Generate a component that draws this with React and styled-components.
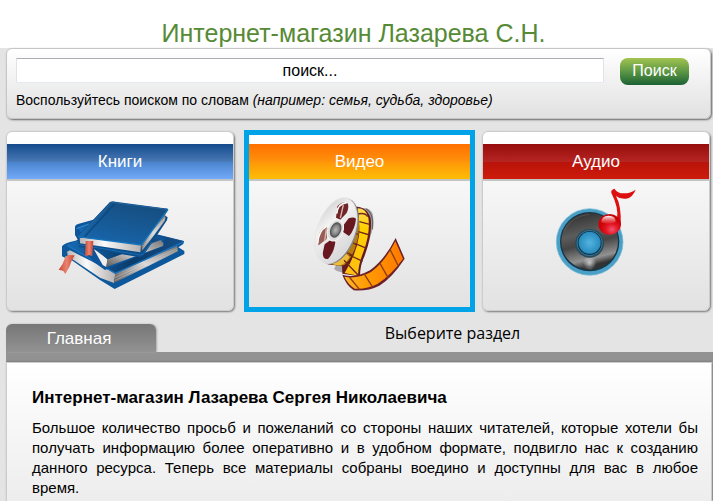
import React from "react";
import styled, { createGlobalStyle } from "styled-components";

const GlobalStyle = createGlobalStyle`
  * { box-sizing: border-box; }
  body {
    margin: 0;
    background: #e4e4e4;
    color: #000;
    font-family: "Liberation Sans", Arial, sans-serif;
    font-size: 16px;
  }
`;

const Shell = styled.div`
  display: flex;
  flex-direction: column;
  min-height: 100vh;
`;

const Header = styled.header`
  background: #fff;
  height: 48px;
  padding: 18px 6px 0 0;
  text-align: center;
`;

const SiteTitle = styled.h1`
  margin: 0;
  font-size: 25px;
  line-height: 30px;
  font-weight: 400;
  color: #568a35;
`;

const Page = styled.main`
  flex: 1;
  display: flex;
  flex-direction: column;
  padding: 0 2px 0 6px;
`;

const SearchPanel = styled.form`
  height: 71px;
  padding: 9px 21px 0 9px;
  border: 1px solid #c6c6c6;
  border-radius: 6px;
  background: linear-gradient(#fff, #e1e1e1);
  box-shadow: 1px 1px 2px #666;
`;

const SearchRow = styled.div`
  display: flex;
  align-items: flex-start;
  gap: 16px;
`;

const SearchInput = styled.input`
  flex: 1;
  min-width: 0;
  height: 25px;
  padding: 0 1px;
  border: 1px solid #e2e3ea;
  border-top-color: #abadb3;
  border-bottom-color: #e3e9ef;
  border-radius: 1px;
  background: #fff;
  color: #000;
  font: inherit;
  text-align: center;
`;

const SearchButton = styled.button`
  width: 69px;
  height: 27px;
  padding: 0 0 1px;
  border: 0;
  border-radius: 8px;
  background: linear-gradient(#a2c350, #5d9745 50%, #1b6134);
  color: #fff;
  font: inherit;
`;

const SearchHint = styled.label`
  display: block;
  margin-top: 7px;
  font-size: 14px;
  line-height: 16px;
`;

const Sections = styled.nav`
  display: grid;
  grid-template-columns: repeat(3, 1fr);
  gap: 10px;
  margin: 12px 1px 0 0;
`;

const SectionCard = styled.a`
  display: block;
  height: ${(p) => (p.$selected ? 182 : 180)}px;
  margin: ${(p) => (p.$selected ? "-1px -3px -1px 0" : "0")};
  padding-top: ${(p) => (p.$selected ? 9 : 12)}px;
  border: ${(p) => (p.$selected ? "5px solid #00a2e8" : "1px solid #ccc")};
  border-radius: ${(p) => (p.$selected ? 0 : 6)}px;
  background: linear-gradient(#fff, #e2e2e2);
  box-shadow: ${(p) => (p.$selected ? "none" : "1px 1px 2px #777")};
  color: #fff;
  font-size: 17px;
  text-align: center;
  text-decoration: none;
`;

const bands = {
  blue: "linear-gradient(#144a8d, #4878b4 49%, #4a84cd 52%, #72aafa)",
  orange: "linear-gradient(#ff7000, #ff910b 50%, #ff9708 51%, #fdbd05)",
  red: "linear-gradient(#960c0c, #b52522 50%, #b9130a 51%, #cd1c0b)",
};

const Band = styled.span`
  display: block;
  height: 37px;
  border-bottom: 2px solid #c3c5c5;
  background: ${(p) => bands[p.$tone]};
  line-height: 35px;
`;

const Picture = styled.svg`
  display: block;
  height: 120px;
  margin: 0 auto;
`;

const TabRow = styled.div`
  display: flex;
  align-items: flex-start;
  height: 38px;
  margin: 13px -2px 0 0;
  border-bottom: 10px solid #929292;
`;

const Tab = styled.a`
  width: 150px;
  height: 28px;
  padding-right: 4px;
  border-radius: 6px 6px 0 0;
  background: linear-gradient(#777, #929292);
  box-shadow: 1px 0 2px #aaa;
  color: #fff;
  font-size: 17px;
  line-height: 30px;
  text-align: center;
  text-decoration: none;
`;

const Prompt = styled.p`
  flex: 1;
  margin: 0;
  padding-left: 36px;
  font-family: "Open Sans", "Noto Sans", sans-serif;
  line-height: 18px;
  text-align: center;
`;

const Article = styled.article`
  flex: 1;
  margin-right: -1px;
  padding: 25px 13px 0 25px;
  border: 1px solid #ccc;
  border-bottom: 0;
  background: linear-gradient(#fff, #e9e9e9 170px);
  box-shadow: 1px 0 2px #666;
`;

const ArticleTitle = styled.h2`
  margin: 0 0 10px;
  font-size: 17px;
  line-height: 20px;
`;

const ArticleText = styled.p`
  margin: 0;
  font-size: 15px;
  line-height: 20px;
  text-align: justify;
`;

const FullLines = styled.span`
  display: block;
  text-align-last: justify;
`;

function Books() {
  return (
    <Picture width="160" viewBox="0 -42 480 360" aria-hidden="true">
      <defs>
        <linearGradient id="cover" x1="0" y1="1" x2=".5" y2="0">
          <stop offset="0" stopColor="#1768b0" />
          <stop offset="1" stopColor="#164f82" />
        </linearGradient>
        <linearGradient id="coverDark">
          <stop offset="0" stopColor="#176bb4" />
          <stop offset=".55" stopColor="#0b3c6c" />
          <stop offset="1" stopColor="#164f88" />
        </linearGradient>
        <linearGradient id="leaves">
          <stop offset="0" stopColor="#b9b6b5" />
          <stop offset=".4" stopColor="#fafafa" />
          <stop offset="1" stopColor="#b5b1b0" />
        </linearGradient>
        <linearGradient id="edge" x1="0" y1="1" x2="1" y2="0">
          <stop offset="0" stopColor="#5e5a5a" />
          <stop offset=".5" stopColor="#d8d6d6" />
          <stop offset="1" stopColor="#777" />
        </linearGradient>
        <linearGradient id="ribbon">
          <stop offset="0" stopColor="#c94a35" />
          <stop offset=".5" stopColor="#e98471" />
          <stop offset="1" stopColor="#c5412e" />
        </linearGradient>
      </defs>
      <path d="M66 154Q72 144 106 137L140 125 350 118 432 138 430 147 415 157 433 168V177L224 282 180 255 77 183 76 189 66 184Z" fill="#0d579b" />
      <path d="M81 170L90 166 226 235 222 264 180 248 84 184Z" fill="url(#leaves)" />
      <path d="M226 235L411 153 414 169 222 264Z" fill="url(#edge)" />
      <path d="M224 249L412 160M224 257L413 165" stroke="#eee" strokeOpacity=".5" strokeWidth="2" />
      <path d="M80 150L110 137 350 119 432 139 226 236Z" fill="url(#coverDark)" />
      <path d="M82 151L226 235 430 141" fill="none" stroke="#1c73bd" strokeWidth="4" />
      <path d="M105 95Q106 89 114 87L168 72 368 125 378 132 370 140 370 152 195 225 160 200 120 145 105 120Z" fill="#0c559a" />
      <path d="M160 160L174 166 202 193 199 216 188 210Z" fill="#eee" />
      <path d="M202 193L362 135 370 145 369 153 199 216Z" fill="url(#edge)" />
      <path d="M111 97L160 78 365 132 203 193 166 165Z" fill="url(#coverDark)" />
      <path d="M109 101L148 87" stroke="#3787c9" strokeWidth="3" />
      <path d="M112 128L114 123 210 21Q218 17 226 20L384 41 382 49 374 61 383 67 381 76 309 183 300 187 118 156Z" fill="#0c4e8c" />
      <path d="M119 129L129 128 303 148 301 172 120 145Z" fill="url(#leaves)" />
      <path d="M303 147L376 57 375 77 306 169Z" fill="url(#edge)" />
      <path d="M307 157L376 66M307 163L375 71" stroke="#eee" strokeOpacity=".65" strokeWidth="2" />
      <path d="M114 124L210 22 384 42 304 149Z" fill="url(#cover)" />
      <path d="M114 125L304 150 384 43" fill="none" stroke="#1475be" strokeWidth="4" />
      <path d="M134 125L226 24" stroke="#0c477e" strokeWidth="4" />
      <path d="M121 122L215 22 380 43" fill="none" stroke="#2b70aa" strokeWidth="2" />
      <path d="M117 149L300 180 307 179 335 142" fill="none" stroke="#1b6bae" strokeWidth="3" />
      <path d="M137 138H160L157 184 148 180 135 184Z" fill="url(#ribbon)" />
      <path d="M84 180L104 181Q93 199 88 216L76 237 70 228 56 224Q70 207 76 187Z" fill="url(#ribbon)" />
    </Picture>
  );
}

function Film() {
  return (
    <Picture width="140" viewBox="0 0 420 360" aria-hidden="true">
      <defs>
        <linearGradient id="reel" x1="0" y1="0" x2="1" y2="1">
          <stop offset="0" stopColor="#c8c8c8" />
          <stop offset=".35" stopColor="#f2f2f2" />
          <stop offset="1" stopColor="#d1d1d3" />
        </linearGradient>
        <linearGradient id="frames" x1="0" y1="0" x2="0" y2="1">
          <stop offset="0" stopColor="#ffdc58" />
          <stop offset=".3" stopColor="#ffd000" />
          <stop offset="1" stopColor="#ffbe12" />
        </linearGradient>
        <linearGradient id="tail">
          <stop offset="0" stopColor="#ffb52a" />
          <stop offset=".4" stopColor="#ff9b00" />
          <stop offset="1" stopColor="#ff7800" />
        </linearGradient>
        <radialGradient id="hub">
          <stop offset="0" stopColor="#b8b8b8" />
          <stop offset=".6" stopColor="#858585" />
          <stop offset="1" stopColor="#444" />
        </radialGradient>
      </defs>
      <path d="M210 82Q239 76 248 98Q255 130 240 170L175 267Q151 282 132 264L151 230Z" fill="#a9a9ab" />
      <path d="M228 84Q252 96 247 145" fill="none" stroke="#66666a" strokeWidth="4" />
      <path d="M186 77Q230 73 242 112Q248 160 224 224Q210 252 210 286L157 278 156 255 112 250 165 215Z" fill="#641b20" />
      <path d="M116 246Q176 220 192 108L211 112Q206 216 163 252Q144 258 116 246Z" fill="#b87c0c" />
      <path d="M116 246Q147 237 164 215L179 228Q161 257 141 253Z" fill="#eebc38" />
      <path d="M203 82Q228 82 235 110Q242 156 219 216Q205 249 204 284L164 276Q199 219 207 165Q211 128 203 82Z" fill="url(#frames)" />
      <path d="M204 99Q225 94 233 107M208 122L239 130M205 152L239 162M196 188L230 202M180 180L200 192M160 210L188 223M178 222L218 241M162 238L204 282M187 153L204 160" fill="none" stroke="#6e291b" strokeWidth="4" />
      <ellipse cx="143" cy="151" rx="56" ry="103" transform="rotate(20 143 151)" fill="#85868a" />
      <ellipse cx="138" cy="149" rx="56" ry="103" transform="rotate(20 138 149)" fill="url(#reel)" stroke="#e2e2e2" strokeWidth="2" />
      <path d="M138 110L142 76Q155 60 172 66Q179 76 170 96L151 116Z" fill="#702629" />
      <path d="M161 132L176 112Q191 106 198 113Q195 145 177 165L158 152Z" fill="#67191f" />
      <path d="M104 190L126 174 136 183Q132 215 114 234Q96 237 99 212Z" fill="#67191f" />
      <path d="M82 186Q84 145 108 135L118 152 109 175 86 193Z" fill="#985d56" />
      <path d="M83 188Q85 149 110 136M140 98Q143 68 170 65" fill="none" stroke="#fff" strokeWidth="5" />
      <path d="M109 142L104 181M160 72L151 111" stroke="#d8b8b0" strokeWidth="4" />
      <ellipse cx="136" cy="148" rx="23" ry="33" transform="rotate(23 136 148)" fill="#dedede" stroke="#f7f7f7" strokeWidth="3" />
      <ellipse cx="137" cy="147" rx="16" ry="24" transform="rotate(23 137 147)" fill="url(#hub)" />
      <path d="M157 281Q195 293 240 268Q285 235 317 171L344 233Q306 291 268 314Q232 332 191 328Q167 311 157 281Z" fill="#6b202b" />
      <path d="M163 287Q202 295 243 273Q284 244 316 181L339 233Q304 282 262 309Q228 326 194 323Q174 310 163 287Z" fill="url(#tail)" />
      <path d="M178 288L209 326M222 278L247 317M270 247L294 290M301 207L325 255" stroke="#8d3d11" strokeWidth="4" />
    </Picture>
  );
}

function Speaker() {
  return (
    <Picture width="110" viewBox="0 0 330 360" aria-hidden="true">
      <defs>
        <linearGradient id="cone" x1="0" y1="0" x2=".25" y2="1">
          <stop offset="0" stopColor="#282828" />
          <stop offset=".43" stopColor="#5c5c5c" />
          <stop offset=".62" stopColor="#454545" />
          <stop offset=".88" stopColor="#929292" />
          <stop offset="1" stopColor="#333" />
        </linearGradient>
        <radialGradient id="blueDisc">
          <stop offset="0" stopColor="#54b4e0" />
          <stop offset="1" stopColor="#278bbd" />
        </radialGradient>
        <radialGradient id="note" cx=".6" cy=".75">
          <stop offset="0" stopColor="#ef5570" />
          <stop offset=".55" stopColor="#e41422" />
          <stop offset="1" stopColor="#c90409" />
        </radialGradient>
        <linearGradient id="shine" x1="0" y1="0" x2="0" y2="1">
          <stop offset="0" stopColor="#fff" />
          <stop offset="1" stopColor="#ee4545" stopOpacity=".4" />
        </linearGradient>
        <radialGradient id="glow">
          <stop offset="0" stopColor="#ddd" stopOpacity=".8" />
          <stop offset="1" stopColor="#ddd" stopOpacity="0" />
        </radialGradient>
      </defs>
      <circle cx="146" cy="183" r="100" fill="#4a9fc6" stroke="#79bdd9" strokeWidth="2" />
      <circle cx="146" cy="182" r="89" fill="#173748" />
      <circle cx="146" cy="181" r="85" fill="url(#cone)" />
      <ellipse cx="146" cy="245" rx="20" ry="22" fill="url(#glow)" />
      <path d="M68 151Q91 105 145 100M83 218Q111 261 153 264" fill="none" stroke="#777" strokeWidth="2" opacity=".6" />
      <circle cx="146" cy="187" r="43" fill="#28495a" />
      <circle cx="146" cy="186" r="38" fill="#13364b" stroke="#347b9c" strokeWidth="3" />
      <circle cx="146" cy="185" r="33" fill="url(#blueDisc)" />
      <path d="M228 116Q234 80 211 36Q209 26 220 23Q230 37 247 37Q270 37 284 26Q274 51 255 53Q237 55 225 45Q242 76 239 132L231 143Z" fill="#dc1010" />
      <ellipse cx="206" cy="130" rx="34" ry="31" fill="url(#note)" />
      <path d="M181 124Q181 105 203 104Q224 104 224 122Q202 132 181 124Z" fill="url(#shine)" />
    </Picture>
  );
}

export default function App() {
  return (
    <Shell>
      <GlobalStyle />
      <Header>
        <SiteTitle>Интернет-магазин Лазарева С.Н.</SiteTitle>
      </Header>
      <Page>
        <SearchPanel onSubmit={(event) => event.preventDefault()}>
          <SearchRow>
            <SearchInput id="search" type="text" defaultValue="поиск..." />
            <SearchButton type="submit">Поиск</SearchButton>
          </SearchRow>
          <SearchHint htmlFor="search">
            Воспользуйтесь поиском по словам <em>(например: семья, судьба, здоровье)</em>
          </SearchHint>
        </SearchPanel>
        <Sections>
          <SectionCard href="#books">
            <Band $tone="blue">Книги</Band>
            <Books />
          </SectionCard>
          <SectionCard href="#video" $selected>
            <Band $tone="orange">Видео</Band>
            <Film />
          </SectionCard>
          <SectionCard href="#audio">
            <Band $tone="red">Аудио</Band>
            <Speaker />
          </SectionCard>
        </Sections>
        <TabRow>
          <Tab href="#main">Главная</Tab>
          <Prompt>Выберите раздел</Prompt>
        </TabRow>
        <Article>
          <ArticleTitle>Интернет-магазин Лазарева Сергея Николаевича</ArticleTitle>
          <ArticleText>
            <FullLines>
              Большое количество просьб и пожеланий со стороны наших читателей, которые хотели бы
              получать информацию более оперативно и в удобном формате, подвигло нас к созданию
              данного ресурса. Теперь все материалы собраны воедино и доступны для вас в любое
            </FullLines>{" "}
            время.
          </ArticleText>
        </Article>
      </Page>
    </Shell>
  );
}
